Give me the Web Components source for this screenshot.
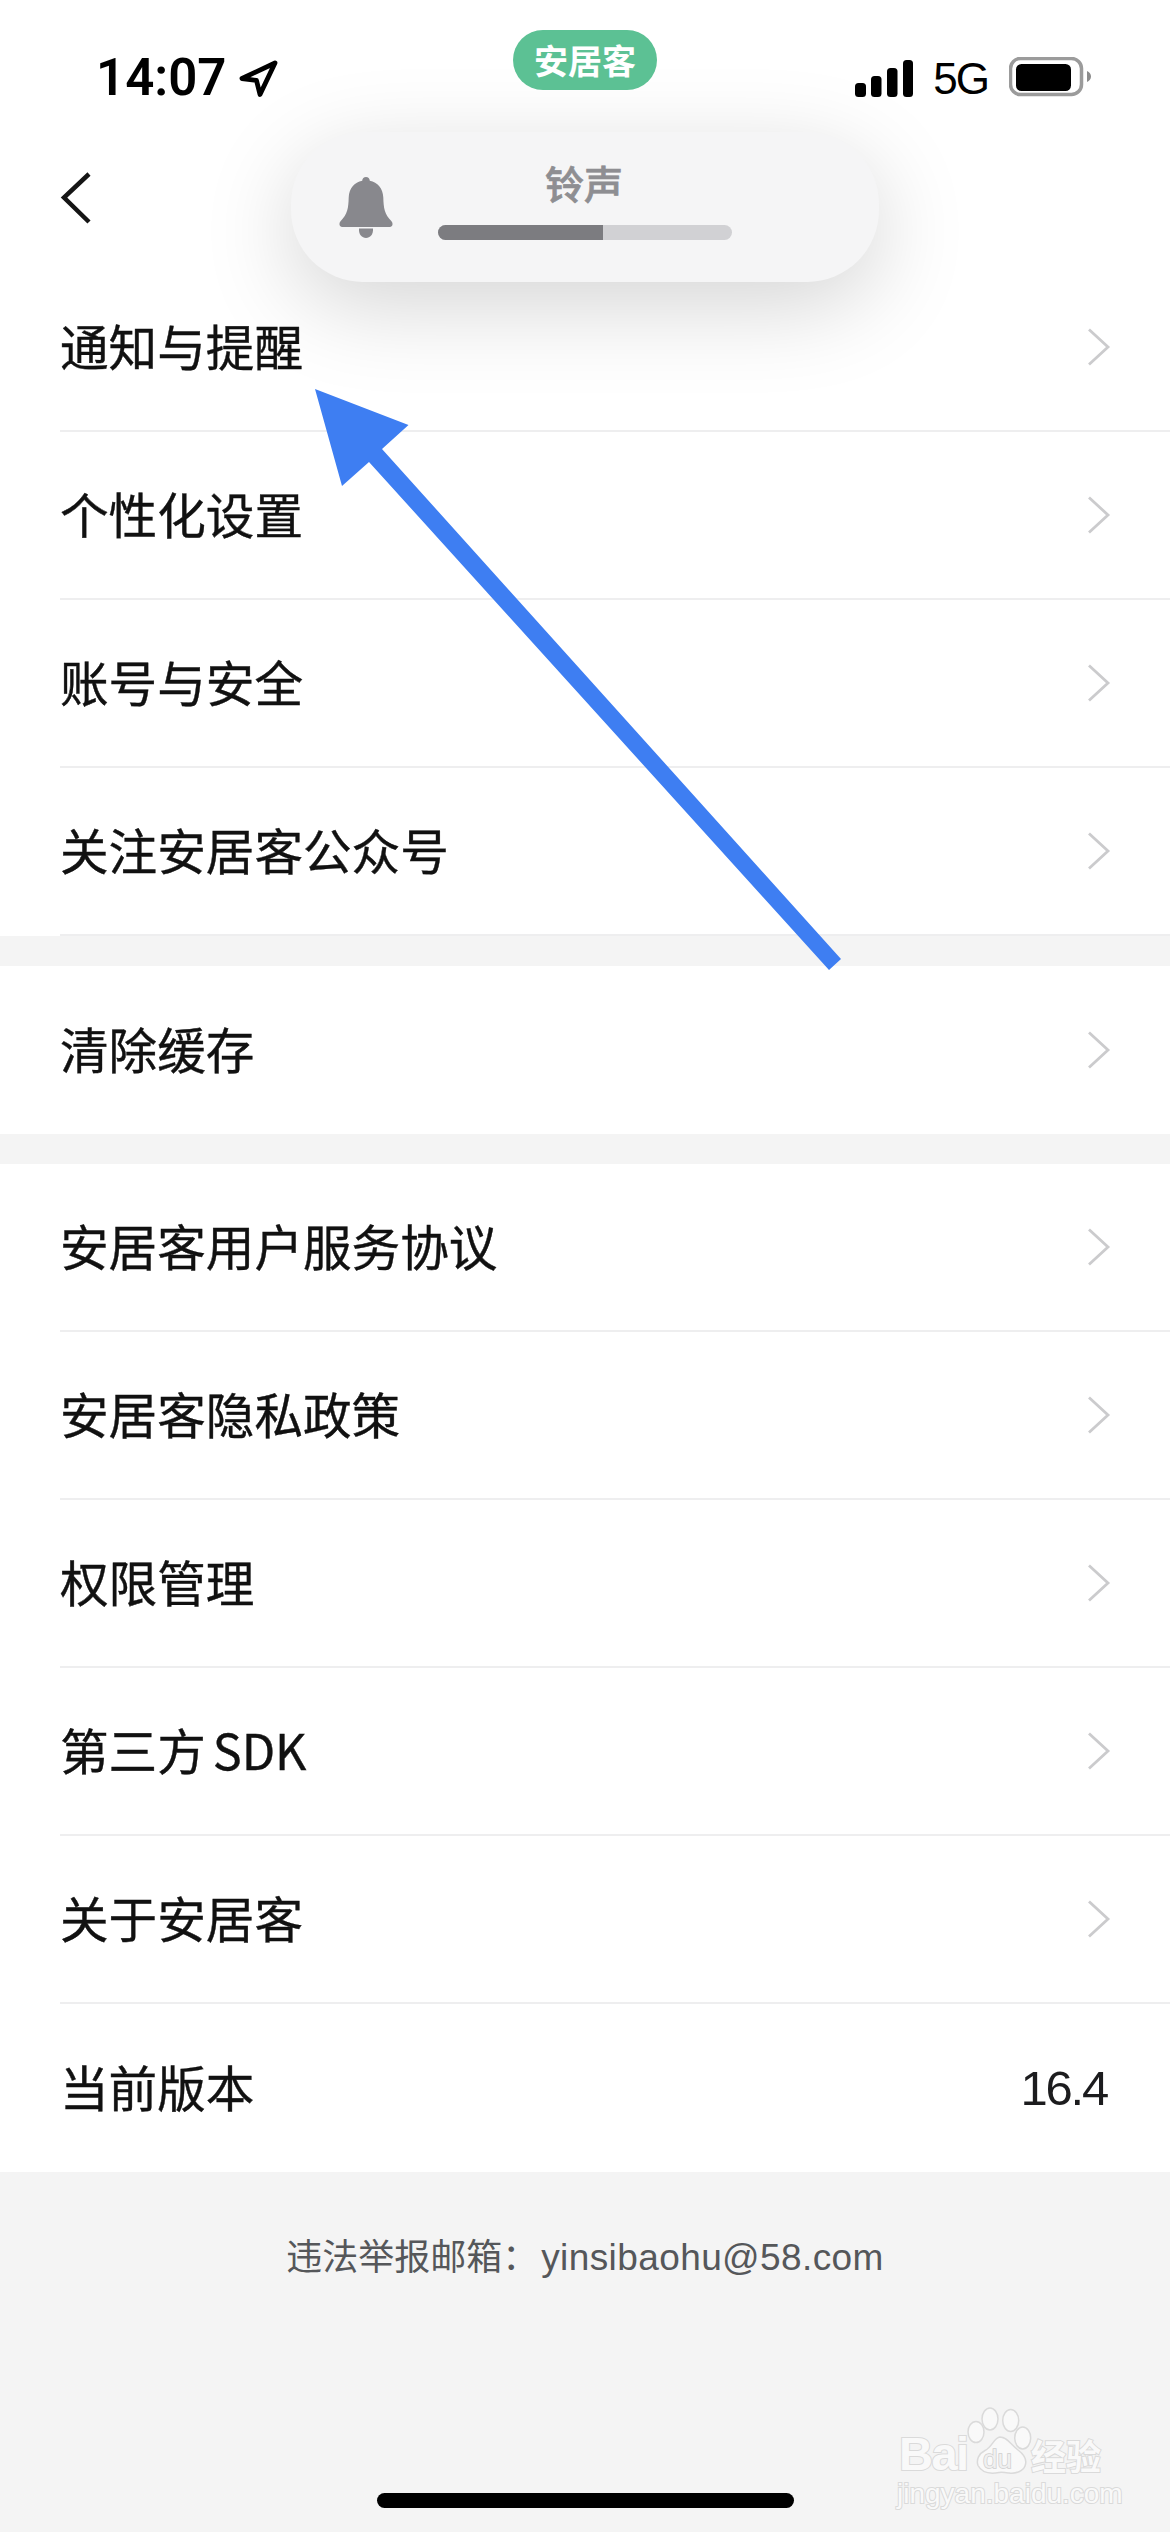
<!DOCTYPE html>
<html lang="zh-CN"><head><meta charset="utf-8"><title>设置</title>
<style>
html,body{margin:0;padding:0;background:#f4f4f4}
body{width:1170px;height:2532px;overflow:hidden;font-family:"Noto Sans CJK SC","Liberation Sans",sans-serif}
</style></head><body>
<settings-page>
  <status-bar slot="top"></status-bar>
  <nav-bar slot="top"></nav-bar>
  <setting-group>
    <setting-row label="通知与提醒"></setting-row>
    <setting-row label="个性化设置"></setting-row>
    <setting-row label="账号与安全"></setting-row>
    <setting-row label="关注安居客公众号"></setting-row>
  </setting-group>
  <setting-group>
    <setting-row label="清除缓存" nosep></setting-row>
  </setting-group>
  <setting-group>
    <setting-row label="安居客用户服务协议"></setting-row>
    <setting-row label="安居客隐私政策"></setting-row>
    <setting-row label="权限管理"></setting-row>
    <setting-row label="第三方 SDK"></setting-row>
    <setting-row label="关于安居客"></setting-row>
    <setting-row label="当前版本" value="16.4" nosep></setting-row>
  </setting-group>
  <page-footer></page-footer>
  <volume-hud slot="over"></volume-hud>
  <app-badge slot="over"></app-badge>
  <annotation-arrow slot="over"></annotation-arrow>
  <baidu-mark slot="over"></baidu-mark>
  <home-bar slot="over"></home-bar>
</settings-page>
<script>
function def(name,html,init){
  customElements.define(name,class extends HTMLElement{
    constructor(){super();this.attachShadow({mode:"open"}).innerHTML=html;}
    connectedCallback(){if(init)init(this,this.shadowRoot);}
  });
}
def("settings-page",`<style>
:host{display:flex;flex-direction:column;position:relative;width:1170px;height:2532px;overflow:hidden;background:#f4f4f4}
.head{background:#fff}
.body{display:flex;flex-direction:column;gap:30px}
</style><div class="head"><slot name="top"></slot></div><div class="body"><slot></slot></div><slot name="over"></slot>`);

def("status-bar",`<style>
:host{display:flex;align-items:flex-start;justify-content:space-between;height:110px;box-sizing:border-box;padding:0 79px 0 96px}
.l{display:flex;align-items:flex-start;margin-top:46px;gap:12px;color:#000}
.t{font:600 51px/64px Roboto,sans-serif}
.r{display:flex;align-items:flex-end;margin-top:58px;height:39px}
.s{display:block}
.g{font:44px/40px "Liberation Sans",sans-serif;color:#000;letter-spacing:-2px;margin-left:20px;height:38px}
.b{display:block;margin-left:21px}
</style>
<div class="l"><span class="t">14:07</span>
<svg width="40" height="40" viewBox="0 0 40 40" style="margin-top:13px"><path d="M37 4 4 19.500l14.500 2L22 35.500Z" fill="none" stroke="#000" stroke-width="4.800" stroke-linejoin="round"/></svg></div>
<div class="r">
<svg class="s" width="58" height="38" viewBox="0 0 58 38" fill="#000"><rect x="0" y="24" width="11" height="14" rx="3.500"/><rect x="16" y="17" width="10.500" height="21" rx="3.500"/><rect x="32" y="9" width="10.500" height="29" rx="3.500"/><rect x="48" y="1" width="10" height="37" rx="3.500"/></svg>
<span class="g">5G</span>
<svg class="b" width="82" height="40" viewBox="0 0 82 40"><rect x="1.500" y="1.500" width="71" height="36" rx="10" fill="none" stroke="#9b9b9b" stroke-width="3.500"/><rect x="7" y="7" width="55" height="27" rx="5.500" fill="#000"/><path d="M78 14c2.500 1 4 3 4 5.500s-1.500 4.500-4 5.500Z" fill="#8c8c8c"/></svg>
</div>`);

def("nav-bar",`<style>
:host{display:flex;align-items:flex-start;height:154px}
svg{margin:62px 0 0 60px;display:block}
</style><svg width="32" height="52" viewBox="0 0 32 52"><path d="M29 2 4 25.500 29 50" fill="none" stroke="#151515" stroke-width="4.500"/></svg>`);

def("setting-group",`<style>:host{display:block;background:#fff}</style><slot></slot>`);

def("setting-row",`<style>
:host{display:block;height:168px;padding-left:60px;background:#fff;color:#111}
.in{display:flex;align-items:center;justify-content:space-between;box-sizing:border-box;height:168px;padding-right:59px;border-bottom:2px solid #eeeeef}
:host([nosep]) .in{border-bottom:0}
.l{font:400 48.600px/60px "Noto Sans CJK SC",sans-serif;-webkit-text-stroke:.4px #111;margin-bottom:4px;word-spacing:-4px}
.v{font:49px/60px "Liberation Sans",sans-serif;color:#1c1c1e;letter-spacing:-2.200px;margin-right:4px}
svg{display:block}
</style><div class="in"><span class="l"></span><span class="v"></span>
<svg width="24" height="38" viewBox="0 0 24 38"><path d="M2 1.500 21 19 2 36.500" fill="none" stroke="#cbcbcd" stroke-width="2.800"/></svg></div>`,
(h,s)=>{s.querySelector(".l").textContent=h.getAttribute("label");
 const v=h.getAttribute("value");const e=s.querySelector(".v");
 if(v){e.textContent=v;s.querySelector("svg").remove();}else e.remove();});

def("page-footer",`<style>
:host{display:block;margin-top:-30px;padding-top:60px;text-align:center;font:36px/44px "Noto Sans CJK SC","Liberation Sans",sans-serif;color:#55575a}
.e{font:37px/44px "Liberation Sans",sans-serif;letter-spacing:.4px;margin-left:3px}
</style>违法举报邮箱：<span class="e">yinsibaohu@58.com</span>`);

def("volume-hud",`<style>
:host{position:absolute;left:291px;top:132px;width:588px;height:150px;border-radius:72px;background:#f5f5f6;box-shadow:0 24px 90px rgba(0,0,0,.17);display:flex}
svg{position:absolute;left:48px;top:45px}
.t{position:absolute;left:254px;top:25px;font:500 39px/50px "Noto Sans CJK SC",sans-serif;color:#8e8e92;-webkit-text-stroke:.7px #8e8e92}
.tr{position:absolute;left:147px;top:93px;width:294px;height:15px;border-radius:8px;background:#d1d1d4;overflow:hidden}
.f{width:165px;height:15px;background:#7c7c80}
</style><svg width="54" height="62" viewBox="0 0 54 62" fill="#88888d"><path d="M27 0c2.200 0 3.700 1.500 3.800 3.800C38.500 5.300 44 11.500 44.300 20.500c.3 10.500 1 16.500 8.200 23.800 1.800 1.800 1.300 5.700-1.800 5.700H3.300C.2 50-.3 46.100 1.500 44.300 8.700 37 9.400 31 9.700 20.500 10 11.500 15.500 5.300 23.200 3.800 23.300 1.500 24.800 0 27 0Z"/><path d="M20 51.500h14c.5 6-3 9.500-7 9.500s-7.500-3.500-7-9.500Z"/></svg>
<span class="t">铃声</span><div class="tr"><div class="f"></div></div>`);

def("app-badge",`<style>
:host{position:absolute;left:513px;top:30px;width:144px;height:60px;border-radius:30px;background:#5cc194;display:flex;align-items:center;justify-content:center;color:#fff;font:700 34px/60px "Noto Sans CJK SC",sans-serif}
</style>安居客`);

def("annotation-arrow",`<style>:host{position:absolute;left:0;top:0;pointer-events:none}svg{display:block}</style>
<svg width="1170" height="1000" viewBox="0 0 1170 1000"><polygon fill="#3e7ef2" points="315,389 408.500,425 382,449 841,959 829,970 369,462 342,486"/></svg>`);

def("baidu-mark",`<style>
:host{position:absolute;left:897px;top:2407px;width:210px;height:102px;color:#f9f9f9}
.a{position:absolute;-webkit-text-stroke:2px #dadada;paint-order:stroke fill;white-space:nowrap}
.bai{left:2px;top:29px;font:700 47px/36px "Liberation Sans",sans-serif;letter-spacing:-1.500px}
.cn{left:134px;top:30px;font:700 35px/36px "Noto Sans CJK SC",sans-serif}
.url{left:0;top:72px;font:400 28px/30px "Liberation Sans",sans-serif}
.du{left:86px;top:41px;font:400 26px/22px "Liberation Sans",sans-serif;color:#f0f0f0;-webkit-text-stroke:1.500px #cfcfcf}
svg{position:absolute;left:70px;top:0}
</style><svg width="66" height="68" viewBox="0 0 66 68" fill="#f9f9f9" stroke="#dadada" stroke-width="1.500"><ellipse cx="23" cy="12" rx="8" ry="11"/><ellipse cx="43.700" cy="13.500" rx="8" ry="11"/><ellipse cx="9" cy="25" rx="8" ry="10.500"/><ellipse cx="55.700" cy="31" rx="8" ry="11"/><path d="M33 30c7 0 10 7 18 13 8 6 9 11 7 16-2 5-9 8-16 7-3.500-.5-6.500-1-10-.5-8 1.500-17 .5-21-7-2-6 1-12 7-15 7-3 9-13 15-13.500Z"/></svg>
<span class="a du">du</span><span class="a bai">Bai</span><span class="a cn">经验</span><span class="a url">jingyan.baidu.com</span>`);

def("home-bar",`<style>:host{position:absolute;left:377px;top:2493px;width:417px;height:15px;border-radius:8px;background:#000}</style>`);
</script>
</body></html>
